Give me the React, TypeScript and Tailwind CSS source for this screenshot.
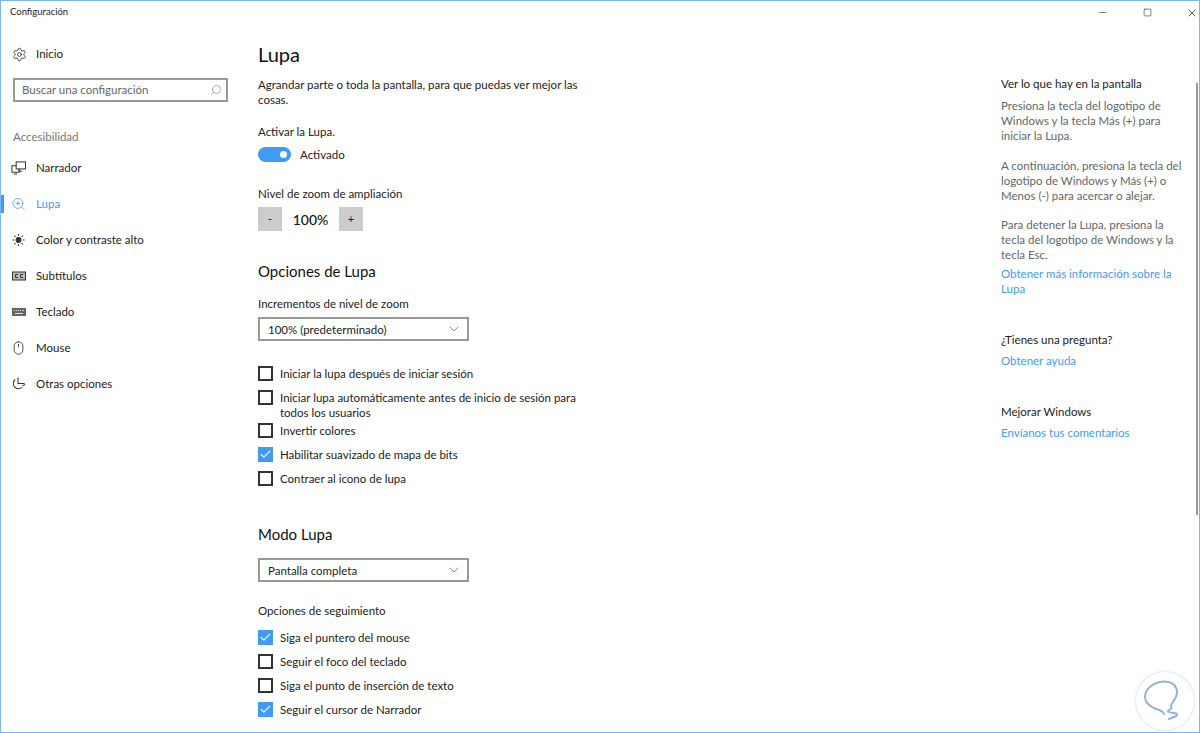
import React from 'react';
import { Settings, Search, ZoomIn, Mouse, Check, ChevronDown, Minus, Square, X } from 'lucide-react';

const font = 'font-["Lato","Open_Sans",sans-serif]';

const NarratorIcon = () => (
  <svg width="16" height="16" viewBox="0 0 16 16" fill="none" stroke="#333" strokeWidth="1.1">
    <rect x="5.5" y="1.5" width="10" height="7.5" />
    <path d="M5.5 5.5H1v7h7.5V9M3 14.5h3.5M9 9v2.5h3" />
  </svg>
);

const SunIcon = () => (
  <svg width="16" height="16" viewBox="0 0 16 16" fill="none" stroke="#333" strokeWidth="1.1">
    <circle cx="8" cy="8" r="2.6" fill="#333" />
    <path d="M8 1.500v2M8 12.500v2M1.500 8h2M12.500 8h2M3.400 3.400l1.400 1.400M11.200 11.200l1.400 1.400M3.400 12.600l1.400-1.400M11.200 4.800l1.400-1.400" />
  </svg>
);

const CcIcon = () => (
  <svg width="14" height="10" viewBox="0 0 14 10" fill="none" stroke="#333" strokeWidth="1">
    <rect x="0.5" y="1" width="13" height="8" fill="#bbb" />
    <path d="M6 3.500H3.500v3H6M11 3.500H8.500v3H11" />
  </svg>
);

const KeyboardIcon = () => (
  <svg width="14" height="10" viewBox="0 0 14 10">
    <rect x="0" y="1" width="14" height="8" fill="#666" />
    <path d="M2 3h1v1H2zM4 3h1v1H4zM6 3h1v1H6zM8 3h1v1H8zM10.500 3h1.500v1h-1.500zM3 6h8v1H3z" fill="#ddd" />
  </svg>
);

const OtherIcon = () => (
  <svg width="16" height="16" viewBox="0 0 16 16" fill="none" stroke="#333" strokeWidth="1.1">
    <path d="M7.500 1v6.500h7M4.500 3.200a5.500 5.500 0 1 0 7.500 8M12 10l3-1.500" />
  </svg>
);

const nav = [
  { label: 'Narrador', icon: <NarratorIcon /> },
  { label: 'Lupa', icon: <ZoomIn size={16} strokeWidth={1.25} />, active: true },
  { label: 'Color y contraste alto', icon: <SunIcon /> },
  { label: 'Subtítulos', icon: <CcIcon /> },
  { label: 'Teclado', icon: <KeyboardIcon /> },
  { label: 'Mouse', icon: <Mouse size={16} strokeWidth={1.25} /> },
  { label: 'Otras opciones', icon: <OtherIcon /> },
];

const Checkbox = ({ checked, label, className = '' }: { checked?: boolean; label: React.ReactNode; className?: string }) => (
  <div className={`flex items-start gap-[7px] ${className}`}>
    {checked ? (
      <span className="w-[15px] h-[15px] bg-[#3f9bf5] flex items-center justify-center shrink-0">
        <Check size={13} strokeWidth={2} className="text-white" />
      </span>
    ) : (
      <span className="w-[15px] h-[15px] border-2 border-[#333] shrink-0" />
    )}
    <span className="text-[11.500px] leading-[15px] text-[#222]">{label}</span>
  </div>
);

const Select = ({ value }: { value: string }) => (
  <div className="w-[211px] h-[24px] border-2 border-[#999] flex items-center justify-between pl-2 pr-[5px]">
    <span className="text-[11.500px] text-[#222]">{value}</span>
    <ChevronDown size={16} strokeWidth={1} className="text-[#555]" />
  </div>
);

const Aside = ({ title, children, className = '' }: { title: string; children: React.ReactNode; className?: string }) => (
  <div className={className}>
    <h3 className="text-[11.500px] leading-[15px] text-[#222]">{title}</h3>
    {children}
  </div>
);

const App: React.FC = () => {
  return (
    <div className={`relative h-[733px] overflow-hidden bg-white border border-[#7ab8f5] flex flex-col ${font}`}>
      {/* Title bar */}
      <header className="h-[30px] shrink-0 flex items-center justify-between">
        <span className="ml-[9px] text-[9.500px] text-[#222] -mt-[8px]">Configuración</span>
        <div className="flex items-center gap-[31px] text-[#222] -mt-[7px]">
          <span className="w-[14px] flex justify-center"><Minus size={11} strokeWidth={1.25} /></span>
          <span className="w-[14px] flex justify-center"><Square size={9} strokeWidth={1.5} /></span>
          <span className="w-[14px] flex justify-center"><X size={12} strokeWidth={1.5} /></span>
        </div>
      </header>

      <div className="flex flex-1 min-h-0">
        {/* Sidebar */}
        <aside className="w-[257px] shrink-0">
          <div className="flex items-center h-[36px] mt-[5px] pl-[11px] gap-[9px] text-[#222]">
            <Settings size={15} strokeWidth={1.25} />
            <span className="text-[11.500px]">Inicio</span>
          </div>
          <div className="ml-[12px] mt-[6px] w-[215px] h-[24px] border-2 border-[#999] flex items-center justify-between pl-[7px] pr-1">
            <span className="text-[11.500px] text-[#666]">Buscar una configuración</span>
            <Search size={12} strokeWidth={1} className="text-[#666] -scale-x-100" />
          </div>
          <p className="ml-[12px] mt-[27px] text-[11.500px] leading-[16px] text-[#777]">Accesibilidad</p>
          <nav className="mt-[5px]">
            {nav.map((item) => (
              <div key={item.label} className="relative flex items-center h-[36px] pl-[10px] gap-[10px] text-[#222]">
                {item.active && <span className="absolute left-0 top-[9px] w-[3px] h-[18px] bg-[#3f9bf5]" />}
                <span className={`w-[15px] flex justify-center ${item.active ? 'text-[#3f9bf5]' : ''}`}>{item.icon}</span>
                <span className={`text-[11.500px] ${item.active ? 'text-[#3f9bf5]' : ''}`}>{item.label}</span>
              </div>
            ))}
          </nav>
        </aside>

        {/* Main column */}
        <main className="w-[743px] shrink-0">
          <h1 className="text-[20px] leading-[26px] text-[#111] mt-[10px]">Lupa</h1>
          <p className="w-[330px] mt-[10px] text-[11.500px] leading-[15px] text-[#222]">
            Agrandar parte o toda la pantalla, para que puedas ver mejor las cosas.
          </p>
          <p className="mt-[17px] text-[11.500px] leading-[15px] text-[#222]">Activar la Lupa.</p>
          <div className="mt-[7px] flex items-center gap-[9px]">
            <span className="w-[33px] h-[15px] rounded-full bg-[#3f9bf5] flex items-center justify-end pr-[4px]">
              <span className="w-[7px] h-[7px] rounded-full bg-white" />
            </span>
            <span className="text-[11.500px] text-[#222]">Activado</span>
          </div>
          <p className="mt-[23px] text-[11.500px] leading-[15px] text-[#222]">Nivel de zoom de ampliación</p>
          <div className="mt-[6px] flex items-center">
            <span className="w-[24px] h-[24px] bg-[#cccccc] flex items-center justify-center text-[11px] text-[#222]">-</span>
            <span className="w-[57px] text-center text-[14px] font-medium text-[#111]">100%</span>
            <span className="w-[24px] h-[24px] bg-[#cccccc] flex items-center justify-center text-[11px] text-[#222]">+</span>
          </div>

          <h2 className="mt-[30px] text-[15px] leading-[20px] text-[#111]">Opciones de Lupa</h2>
          <p className="mt-[15px] mb-[6px] text-[11.500px] leading-[15px] text-[#222]">Incrementos de nivel de zoom</p>
          <Select value="100% (predeterminado)" />

          <div className="w-[330px] mt-[25px]">
            <Checkbox label="Iniciar la lupa después de iniciar sesión" />
            <Checkbox className="mt-[9px]" label="Iniciar lupa automáticamente antes de inicio de sesión para todos los usuarios" />
            <Checkbox className="mt-[3px]" label="Invertir colores" />
            <Checkbox className="mt-[9px]" checked label="Habilitar suavizado de mapa de bits" />
            <Checkbox className="mt-[9px]" label="Contraer al icono de lupa" />
          </div>

          <h2 className="mt-[38px] text-[15px] leading-[20px] text-[#111]">Modo Lupa</h2>
          <div className="mt-[14px]"><Select value="Pantalla completa" /></div>
          <p className="mt-[21px] text-[11.500px] leading-[15px] text-[#222]">Opciones de seguimiento</p>
          <div className="mt-[12px] flex flex-col gap-[9px]">
            <Checkbox checked label="Siga el puntero del mouse" />
            <Checkbox label="Seguir el foco del teclado" />
            <Checkbox label="Siga el punto de inserción de texto" />
            <Checkbox checked label="Seguir el cursor de Narrador" />
          </div>
        </main>

        {/* Right column */}
        <aside className="w-[185px] shrink-0 mt-[45px] text-[11.500px] leading-[15px]">
          <Aside title="Ver lo que hay en la pantalla">
            <p className="mt-[7px] text-[#666]">Presiona la tecla del logotipo de Windows y la tecla Más (+) para iniciar la Lupa.</p>
            <p className="mt-[15px] text-[#666]">A continuación, presiona la tecla del logotipo de Windows y Más (+) o Menos (-) para acercar o alejar.</p>
            <p className="mt-[14px] text-[#666]">Para detener la Lupa, presiona la tecla del logotipo de Windows y la tecla Esc.</p>
            <p className="mt-[4px] text-[#3f9bf5]">Obtener más información sobre la Lupa</p>
          </Aside>
          <Aside title="¿Tienes una pregunta?" className="mt-[36px]">
            <p className="mt-[6px] text-[#3f9bf5]">Obtener ayuda</p>
          </Aside>
          <Aside title="Mejorar Windows" className="mt-[36px]">
            <p className="mt-[6px] text-[#3f9bf5]">Envíanos tus comentarios</p>
          </Aside>
        </aside>
      </div>

      {/* Scrollbar thumb */}
      <span className="absolute right-[1px] top-[82px] w-[2px] h-[432px] bg-[#999]" />

      {/* Watermark */}
      <div className="absolute right-[5px] bottom-[2px] w-[58px] h-[58px] rounded-full bg-white shadow-[0_0_3px_rgba(120,160,210,0.5)] flex items-center justify-center">
        <svg width="58" height="58" viewBox="0 0 58 58" fill="none" stroke="#8fb2da" strokeWidth="2" strokeLinecap="round">
          <path d="M33 47c4-2 9-3 8-5-1-2-8 0-9-3 0-2 5-1 3-5 0-3 7-8 6-15-1-7-8-11-17-9C15 12 9 18 9 25c0 6 6 10 11 12 4 1 7 2 8 5" />
        </svg>
      </div>
    </div>
  );
};

export default App;
